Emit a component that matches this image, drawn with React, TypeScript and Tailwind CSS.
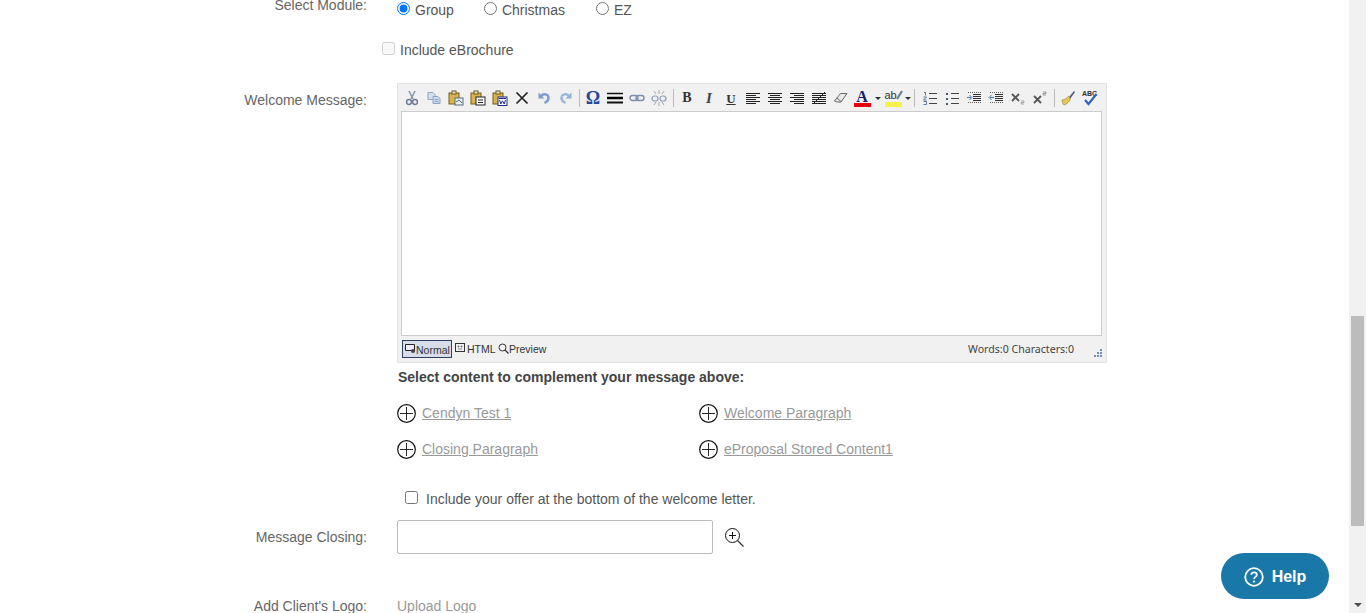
import React from 'react';

const sans = 'font-["Liberation_Sans",Arial,sans-serif]';

function Btn({ children, w = 'w-[22px]' }: { children: React.ReactNode; w?: string }) {
  return <div className={`${w} h-[22px] flex items-center justify-center shrink-0`}>{children}</div>;
}

function Sep({ w = 'w-[5px]' }: { w?: string }) {
  return (
    <div className={`${w} h-[22px] flex items-center justify-center shrink-0`}>
      <div className="w-px h-[18px] bg-[#bbbbbb]" />
    </div>
  );
}

function Ico({ children }: { children: React.ReactNode }) {
  return <svg width="16" height="16" viewBox="0 0 16 16" fill="none">{children}</svg>;
}

function Clip() {
  return (
    <>
      <rect x="1" y="3" width="10" height="11" fill="#d9b44a" stroke="#7a5c16" />
      <rect x="4" y="1" width="4" height="3" fill="#efe6c8" stroke="#6b5a2a" />
    </>
  );
}

function Lines({ rows, color = '#222' }: { rows: [number, number, number][]; color?: string }) {
  return (
    <Ico>
      {rows.map(([x1, x2, y], i) => (
        <path key={i} d={`M${x1} ${y + 0.5}H${x2}`} stroke={color} />
      ))}
    </Ico>
  );
}

const alignLeft: [number, number, number][] = [[1, 15, 3], [1, 11, 5], [1, 15, 7], [1, 11, 9], [1, 15, 11], [1, 11, 13]];
const alignCenter: [number, number, number][] = [[1, 15, 3], [3, 13, 5], [1, 15, 7], [3, 13, 9], [1, 15, 11], [3, 13, 13]];
const alignRight: [number, number, number][] = [[1, 15, 3], [5, 15, 5], [1, 15, 7], [5, 15, 9], [1, 15, 11], [5, 15, 13]];

function Toolbar() {
  return (
    <div className="flex items-center h-[22px] pl-[3px]">
      <Btn>
        <Ico>
          <path d="M5 1l4 8M11 1L7 9" stroke="#8a97a8" strokeWidth="1.6" />
          <circle cx="5" cy="12" r="2.4" stroke="#6f7f99" strokeWidth="1.5" />
          <circle cx="11" cy="12" r="2.4" stroke="#6f7f99" strokeWidth="1.5" />
        </Ico>
      </Btn>
      <Btn>
        <Ico>
          <path d="M2 2.500h5l2 2v5H2z" fill="#d5e0ee" stroke="#8ea3c0" />
          <path d="M7 6.500h5l2 2v5H7z" fill="#cfdcee" stroke="#8ea3c0" />
          <path d="M8.500 9.500h4M8.500 11.500h4" stroke="#8ea3c0" />
        </Ico>
      </Btn>
      <Btn>
        <Ico>
          <Clip />
          <rect x="7" y="8" width="8" height="7" fill="#e8eef6" stroke="#5a6a80" />
          <path d="M8 12l3-2 3 3" stroke="#5a6a80" />
        </Ico>
      </Btn>
      <Btn>
        <Ico>
          <Clip />
          <rect x="6" y="7" width="9" height="8" fill="#fff" stroke="#222" />
          <path d="M8 10h5M8 12.500h5" stroke="#222" />
        </Ico>
      </Btn>
      <Btn>
        <Ico>
          <Clip />
          <rect x="6" y="7" width="9" height="8.500" fill="#fff" stroke="#1f2a8c" />
          <path d="M7 8.500h7" stroke="#1f2a8c" />
          <path d="M7.500 10l1.300 4 1.700-3.200 1.700 3.200 1.300-4" stroke="#1f2a8c" />
        </Ico>
      </Btn>
      <Btn>
        <Ico>
          <path d="M2.500 2.500l11 11M13.500 2.500l-11 11" stroke="#222" strokeWidth="1.700" />
        </Ico>
      </Btn>
      <Btn>
        <Ico>
          <path d="M2.500 2.500v6h6z" fill="#7d9bd0" />
          <path d="M5 6C7 3.500 12.500 3.500 12.500 8c0 2.500-2 4-4 5" stroke="#7d9bd0" strokeWidth="2.400" />
        </Ico>
      </Btn>
      <Btn>
        <Ico>
          <path d="M13.500 2.500v6h-6z" fill="#8fb0d8" />
          <path d="M11 6C9 3.500 3.500 3.500 3.500 8c0 2.500 2 4 4 5" stroke="#9db8dc" strokeWidth="2.400" />
        </Ico>
      </Btn>
      <Sep />
      <Btn>
        <span className='font-["Liberation_Serif",serif] font-bold text-[18px] leading-none text-[#23479a]'>Ω</span>
      </Btn>
      <Btn>
        <Ico>
          <path d="M0 3.500h16" stroke="#111" strokeWidth="1.500" />
          <path d="M0 8h16" stroke="#000" strokeWidth="2.500" />
          <path d="M0 12.500h16" stroke="#111" strokeWidth="2" />
        </Ico>
      </Btn>
      <Btn>
        <Ico>
          <rect x="1" y="5.500" width="8" height="5" rx="2.500" stroke="#7d8fae" strokeWidth="1.400" />
          <rect x="7" y="5.500" width="8" height="5" rx="2.500" stroke="#7d8fae" strokeWidth="1.400" />
        </Ico>
      </Btn>
      <Btn>
        <Ico>
          <rect x="1" y="6" width="6" height="5" rx="2.500" stroke="#8fa0b8" strokeWidth="1.200" />
          <rect x="9" y="6" width="6" height="5" rx="2.500" stroke="#8fa0b8" strokeWidth="1.200" />
          <path d="M8 0v4M8 12v4M3 1l2 3M13 1l-2 3M3 15l2-3M13 15l-2-3" stroke="#a9a9a9" />
        </Ico>
      </Btn>
      <Sep w="w-[6px]" />
      <Btn><span className='font-["Liberation_Serif",serif] font-bold text-[14px] leading-none text-[#333]'>B</span></Btn>
      <Btn><span className='font-["Liberation_Serif",serif] italic font-bold text-[15px] leading-none text-[#444]'>I</span></Btn>
      <Btn><span className='font-["Liberation_Serif",serif] font-bold underline text-[13px] leading-none text-[#333]'>U</span></Btn>
      <Btn><Lines rows={alignLeft} /></Btn>
      <Btn><Lines rows={alignCenter} /></Btn>
      <Btn><Lines rows={alignRight} /></Btn>
      <Btn>
        <Ico>
          <path d="M1 3.500h14M1 5.500h14M1 7.500h14M1 9.500h14M1 11.500h14M1 13.500h14" stroke="#222" />
          <path d="M2 14L14 2" stroke="#222" />
        </Ico>
      </Btn>
      <Btn>
        <Ico>
          <path d="M1.500 11l6-7.500h6.500l-6 8.500H4z" fill="#e9e9e9" stroke="#666" />
          <path d="M4 8l4 3.500" stroke="#666" />
        </Ico>
      </Btn>
      <Btn>
        <div className="flex flex-col items-center -ml-[2px]">
          <span className='font-["Liberation_Serif",serif] font-bold text-[16px] leading-[13px] text-[#14206e]'>A</span>
          <div className="w-[17px] h-[4px] bg-[#e8000f]" />
        </div>
      </Btn>
      <Btn w="w-[8px]"><div className="border-x-[3px] border-t-[3px] border-x-transparent border-t-[#333]" /></Btn>
      <Btn>
        <div className="relative w-[17px] h-[18px]">
          <span className={`absolute left-0 top-0 text-[11px] leading-[12px] text-[#333] ${sans}`}>ab</span>
          <svg className="absolute -right-[1px] top-[1px]" width="8" height="11" viewBox="0 0 8 11" fill="none">
            <path d="M7 1L2 9" stroke="#6a7f9c" strokeWidth="2.200" />
          </svg>
          <div className="absolute bottom-0 left-0 w-[17px] h-[5px] bg-[#f6f24a]" />
        </div>
      </Btn>
      <Btn w="w-[8px]"><div className="border-x-[3px] border-t-[3px] border-x-transparent border-t-[#333]" /></Btn>
      <Sep w="w-[4px]" />
      <div className="w-[3px] shrink-0" />
      <Btn>
        <Ico>
          <path d="M2 2.500h1.500v3M1.500 7h3l-3 3h3M1.500 11.500h3v3h-3" stroke="#3b5c8c" strokeWidth=".8" />
          <path d="M7 3.500h8M7 8.500h8M7 13.500h8" stroke="#444" />
        </Ico>
      </Btn>
      <Btn>
        <Ico>
          <rect x="2" y="3" width="2" height="2" fill="#4a5a70" />
          <rect x="2" y="8" width="2" height="2" fill="#4a5a70" />
          <rect x="2" y="13" width="2" height="2" fill="#4a5a70" />
          <path d="M7 3.500h8M7 8.500h8M7 13.500h8" stroke="#444" />
        </Ico>
      </Btn>
      <Btn>
        <Ico>
          <path d="M1 7.500h4" stroke="#4b7fb8" strokeWidth="1.200" />
          <path d="M3.500 5l2.500 2.500L3.500 10" stroke="#4b7fb8" />
          <path d="M7 4.500h8M7 6.500h8M7 8.500h8M7 10.500h8" stroke="#333" />
          <path d="M2 2.500h13M2 12.500h13" stroke="#666" strokeDasharray="1 1" />
        </Ico>
      </Btn>
      <Btn>
        <Ico>
          <path d="M2 7.500h4" stroke="#4b7fb8" strokeWidth="1.200" />
          <path d="M3.500 5L1 7.500 3.500 10" stroke="#4b7fb8" />
          <path d="M7 4.500h8M7 6.500h8M7 8.500h8M7 10.500h8" stroke="#333" />
          <path d="M2 2.500h13M2 12.500h13" stroke="#666" strokeDasharray="1 1" />
        </Ico>
      </Btn>
      <Btn>
        <Ico>
          <path d="M2 4l7 7M9 4l-7 7" stroke="#555" strokeWidth="1.800" />
          <path d="M11 11h3v1.500h-3V14h3" stroke="#999" strokeWidth=".8" />
        </Ico>
      </Btn>
      <Btn>
        <Ico>
          <path d="M2 6l7 7M9 6l-7 7" stroke="#555" strokeWidth="1.800" />
          <path d="M11 2h3v1.500h-3V5h3" stroke="#888" strokeWidth=".8" />
        </Ico>
      </Btn>
      <Sep w="w-[6px]" />
      <Btn>
        <Ico>
          <path d="M9 7l5-6 1 1-5 7z" fill="#4a5a78" />
          <path d="M2 10c3 0 4.500-2 6.500-3.500l2 2.500C9 12 7 14 4 15c-1-1-2-3-2-5z" fill="#e6c85a" stroke="#96792a" strokeWidth=".6" />
        </Ico>
      </Btn>
      <Btn>
        <Ico>
          <text x="0" y="6" fontSize="7" fontWeight="700" fill="#333" fontFamily="Liberation Sans">ABC</text>
          <path d="M3 10l3.500 4L14.500 4" stroke="#2f63c4" strokeWidth="2.200" />
        </Ico>
      </Btn>
    </div>
  );
}

function EditorFooter() {
  const tab = 'text-[10.5px] text-[#333]';
  return (
    <div className="flex items-center h-[26px] pl-[4px] pr-[3px]">
      <div className="w-[50px] h-[18px] border border-[#2f3f60] bg-[#d7deea] flex items-center pl-[2px] shrink-0">
        <svg width="11" height="11" viewBox="0 0 11 11" fill="none" className="shrink-0 -mt-[2px]">
          <path d="M.5 1.500h9v6h-9z" stroke="#222" fill="#eef" />
          <circle cx="8" cy="8" r="2" fill="#444" />
        </svg>
        <span className={`${tab} leading-[16px] mt-[1px]`}>Normal</span>
      </div>
      <div className="flex items-center ml-[3px] w-[43px] shrink-0">
        <svg width="10" height="10" viewBox="0 0 10 10" fill="none" className="shrink-0 -mt-[2px]">
          <rect x=".5" y=".5" width="9" height="8" stroke="#333" />
          <path d="M3 3h1v1H3zM6 3h1v1H6zM3 6h4" stroke="#555" strokeWidth=".7" />
        </svg>
        <span className={`${tab} ml-[2px] mt-[1px]`}>HTML</span>
      </div>
      <div className="flex items-center shrink-0">
        <svg width="11" height="11" viewBox="0 0 11 11" fill="none" className="shrink-0 -mt-[2px]">
          <circle cx="4.500" cy="4.500" r="3.500" stroke="#333" />
          <path d="M7 7l3.500 3.500" stroke="#333" strokeWidth="1.300" />
        </svg>
        <span className={`${tab} mt-[1px]`}>Preview</span>
      </div>
      <div className="flex-1" />
      <span className='font-["Noto_Sans",sans-serif] text-[10.6px] text-[#444] mr-[19px] mt-[1px]'>Words:0 Characters:0</span>
      <svg width="9" height="9" viewBox="0 0 9 9" className="self-end mb-[4px] mr-[1px]">
        <path d="M7 0h2v2H7zM4 3h2v2H4zM7 3h2v2H7zM1 6h2v2H1zM4 6h2v2H4zM7 6h2v2H7z" fill="#6f8fb8" />
      </svg>
    </div>
  );
}

function AddLink({ label }: { label: string }) {
  return (
    <div className="flex items-center h-5 gap-[6px]">
      <svg width="19" height="19" viewBox="0 0 19 19" fill="none" className="shrink-0">
        <circle cx="9.500" cy="9.500" r="8.800" stroke="#111" strokeWidth="1.200" />
        <path d="M3 9.500h13M9.500 3v13" stroke="#111" strokeWidth=".9" />
      </svg>
      <a className="text-[14px] leading-5 text-[#999] underline cursor-pointer">{label}</a>
    </div>
  );
}

function Label({ children, className = '' }: { children: React.ReactNode; className?: string }) {
  return (
    <div className={`w-[367px] shrink-0 text-right text-[14px] leading-5 text-[#666] mr-[30px] ${className}`}>
      {children}
    </div>
  );
}

function Radio({ label, checked }: { label: string; checked?: boolean }) {
  return (
    <label className="flex items-center h-5 gap-[5px] text-[14px] text-[#555]">
      <input type="radio" name="module" defaultChecked={checked} className="w-[13px] h-[13px] m-0 -mt-[3px]" />
      {label}
    </label>
  );
}

export default function App() {
  return (
    <div className={`flex h-[613px] overflow-hidden bg-white ${sans}`}>
      <div className="flex-1 min-w-0 h-full">
        <div className="flex h-5">
          <Label className="-mt-[5px]">Select Module:</Label>
          <div className="flex">
            <Radio label="Group" checked />
            <div className="ml-[30px]"><Radio label="Christmas" /></div>
            <div className="ml-[31px]"><Radio label="EZ" /></div>
          </div>
        </div>

        <label className="flex items-center h-5 mt-5 pl-[382px] gap-[5px] text-[14px] text-[#555]">
          <input type="checkbox" disabled className="w-[13px] h-[13px] m-0 -mt-[3px]" />
          Include eBrochure
        </label>

        <div className="flex mt-[23px]">
          <Label className="mt-[7px]">Welcome Message:</Label>
          <div className="w-[710px] h-[280px] border border-[#e2e2e2] bg-[#f1f1f1] pt-[3px] flex flex-col">
            <Toolbar />
            <div className="h-[225px] ml-[3px] mr-[4px] mt-[2px] bg-white border border-[#cccccc] shrink-0" />
            <EditorFooter />
          </div>
        </div>

        <div className="ml-[398px] mt-1 h-5 text-[14px] leading-5 font-bold text-[#444]">
          Select content to complement your message above:
        </div>

        <div className="ml-[397px] mt-4 grid grid-cols-[302px_1fr] gap-y-4">
          <AddLink label="Cendyn Test 1" />
          <AddLink label="Welcome Paragraph" />
          <AddLink label="Closing Paragraph" />
          <AddLink label="eProposal Stored Content1" />
        </div>

        <label className="flex items-center h-5 mt-[30px] ml-[405px] gap-[8px] text-[14px] text-[#555]">
          <input type="checkbox" className="w-[13px] h-[13px] m-0 -mt-[3px]" />
          Include your offer at the bottom of the welcome letter.
        </label>

        <div className="flex mt-[11px]">
          <Label className="mt-[7px]">Message Closing:</Label>
          <input type="text" className="w-[316px] h-[34px] border border-[#bbbbbb] rounded-[2px] bg-white" />
          <svg width="21" height="21" viewBox="0 0 21 21" fill="none" className="ml-[11px] mt-[7px]">
            <circle cx="8.500" cy="8.500" r="7" stroke="#111" />
            <path d="M5 8.500h7M8.500 5v7" stroke="#111" />
            <path d="M13.500 13.500l6 6" stroke="#333" strokeWidth="1.300" />
          </svg>
        </div>

        <div className="flex mt-[42px]">
          <Label>Add Client's Logo:</Label>
          <span className="text-[14px] leading-5 text-[#999]">Upload Logo</span>
        </div>
      </div>

      <div className="w-[17px] h-full bg-[#f1f1f1] flex flex-col items-center shrink-0">
        <div className="w-[13px] h-[210px] bg-[#bcbcbc] mt-[316px]" />
        <div className="mt-auto mb-[6px] border-x-[4px] border-t-[4px] border-x-transparent border-t-[#505050]" />
      </div>

      <button className="absolute left-[1221px] top-[553px] w-[108px] h-[46px] rounded-[23px] bg-[#1a78a8] flex items-center justify-center gap-[8px] pt-[1px] text-white font-bold text-[16px]">
        <svg width="20" height="20" viewBox="0 0 20 20" fill="none">
          <circle cx="10" cy="10" r="8.800" stroke="#fff" strokeWidth="1.800" />
          <path d="M7.300 7.800C7.300 4.600 12.800 4.800 12.800 7.800c0 2-2.800 2.200-2.800 4.200" stroke="#fff" strokeWidth="1.800" />
          <circle cx="10" cy="14.600" r="1.100" fill="#fff" />
        </svg>
        Help
      </button>
    </div>
  );
}
